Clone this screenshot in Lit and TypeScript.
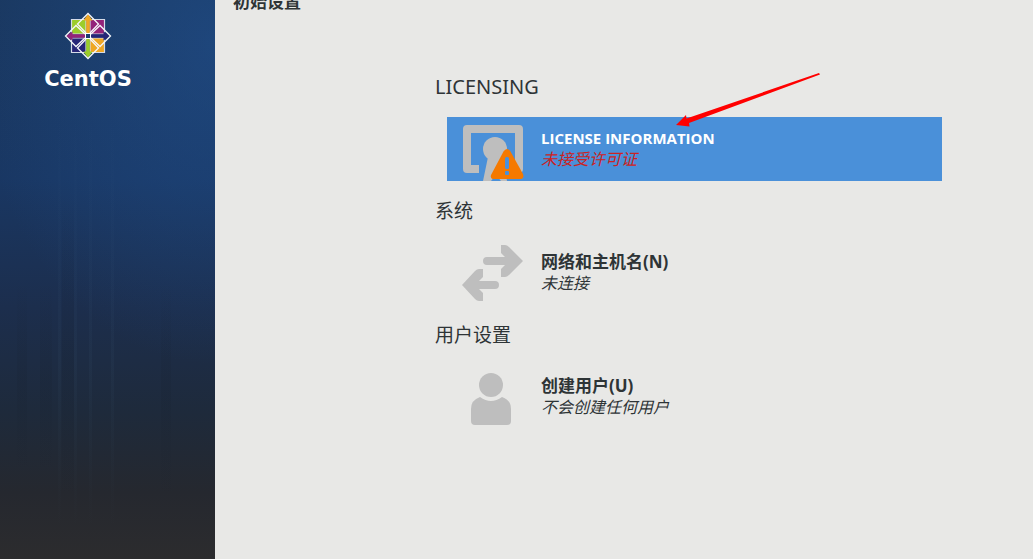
import { LitElement, html, svg, css, nothing, type TemplateResult } from "lit";
import { customElement, property } from "lit/decorators.js";

const licenseIcon = svg`
  <path fill="#bebebe" d="M4 0H56Q60 0 60 4V44Q60 48 56 48H52V8H8V40H16V48H4Q0 48 0 44V4Q0 0 4 0Z"/>
  <circle cx="32" cy="24" r="12" fill="#bebebe"/>
  <path fill="#bebebe" d="M25 32L20 56H28L33 50L38 56H44L40 32Z"/>
  <path fill="#f57900" d="M44 24Q46 24 47.500 26.500L60 49Q61.500 54 57 54H31Q27 54 28 50L40.500 26.500Q42 24 44 24Z"/>
  <rect x="42" y="32" width="4" height="12" rx="1.500" fill="#4a90d9"/>
  <rect x="42" y="46" width="4" height="4" rx="1" fill="#4a90d9"/>`;

const networkIcon = svg`
  <g fill="#bebebe">
    <path d="M38 -4H42Q44 -4 46 -2L60 12L46 26Q44 28 42 28H38V20L42 16H24A4 4 0 0 1 24 8H42L38 4Z"/>
    <path d="M20 20H16Q14 20 12 22L-1 36L12 50Q14 52 16 52H20V44L16 40H32A4 4 0 0 0 32 32H16L20 28Z"/>
  </g>`;

const userIcon = svg`
  <g fill="#bebebe">
    <circle cx="28" cy="12" r="12"/>
    <path d="M17 24Q28 32 39 24Q48 27 48 36V48Q48 52 44 52H12Q8 52 8 48V36Q8 27 17 24Z"/>
  </g>`;

@customElement("centos-logo")
class CentosLogo extends LitElement {
  static styles = css`
    :host {
      display: flex;
      flex-direction: column;
      align-items: center;
      width: 88px;
      color: #fff;
    }
    svg {
      display: block;
      width: 48px;
      height: 48px;
    }
    .name {
      font: bold 21px/24px "DejaVu Sans", sans-serif;
      margin-top: 7px;
    }
  `;

  render() {
    return html`
      <svg viewBox="-24 -24 48 48" aria-hidden="true">
        <g stroke="#d5dbe8" stroke-width="1.200">
          <path fill="#9ccd2a" d="M-16.500 -16.500H-2V-2H-16.500Z" />
          <path fill="#932279" d="M2 -16.500H16.500V-2H2Z" />
          <path fill="#262577" d="M-16.500 2H-2V16.500H-16.500Z" />
          <path fill="#efa724" d="M2 2H16.500V16.500H2Z" />
        </g>
        <g>
          <path fill="#efa724" d="M0 -22L4.500 -15.500H1.800V-2H-1.800V-15.500H-4.500Z" />
          <path fill="#262577" d="M22 0L15.500 4.500V1.800H2V-1.800H15.500V-4.500Z" />
          <path fill="#9ccd2a" d="M0 22L-4.500 15.500H-1.800V2H1.800V15.500H4.500Z" />
          <path fill="#932279" d="M-22 0L-15.500 -4.500V-1.800H-2V1.800H-15.500V4.500Z" />
        </g>
        <g fill="none" stroke="#f6f6f9" stroke-width="1.300">
          <path d="M-2 -3L-10.500 -12L0 -22.500L10.500 -12L2 -3" />
          <path d="M-2 3L-10.500 12L0 22.500L10.500 12L2 3" />
          <path d="M-3 -2L-12 -10.500L-22.500 0L-12 10.500L-3 2" />
          <path d="M3 -2L12 -10.500L22.500 0L12 10.500L3 2" />
        </g>
        <rect x="-2.500" y="-2.500" width="5" height="5" fill="#1b3d70" stroke="#fff" stroke-width="1" />
      </svg>
      <span class="name">CentOS</span>
    `;
  }
}

@customElement("hub-spoke")
class HubSpoke extends LitElement {
  @property() title = "";
  @property() status = "";
  @property({ type: Boolean }) selected = false;
  @property({ attribute: false }) icon: TemplateResult | typeof nothing = nothing;

  static styles = css`
    :host {
      display: block;
    }
    .spoke {
      display: flex;
      align-items: center;
      gap: 14px;
      width: 100%;
      height: 64px;
      margin: 0;
      padding: 0 12px;
      border: 0;
      background: transparent;
      color: #2e3436;
      font-family: "Noto Sans", "Noto Sans CJK SC", sans-serif;
      text-align: left;
      overflow: hidden;
    }
    .selected {
      background: #4a90d9;
      color: #fff;
    }
    svg {
      display: block;
      flex: none;
      width: 68px;
      height: 64px;
    }
    .text {
      display: flex;
      flex-direction: column;
      padding-bottom: 2px;
    }
    .title {
      font: bold 17px/22px "Open Sans", "Noto Sans CJK SC", sans-serif;
    }
    .selected .title {
      font-size: 15px;
    }
    .status {
      font-size: 16px;
      line-height: 20px;
      font-style: italic;
    }
    .selected .status {
      color: #cc2222;
    }
  `;

  render() {
    return html`
      <button class="spoke ${this.selected ? "selected" : ""}" type="button">
        <svg viewBox="-4 -8 68 64" aria-hidden="true">${this.icon}</svg>
        <span class="text">
          <span class="title">${this.title}</span>
          <span class="status">${this.status}</span>
        </span>
      </button>
    `;
  }
}

const groups = [
  { heading: "LICENSING", title: "LICENSE INFORMATION", status: "未接受许可证", icon: licenseIcon, selected: true },
  { heading: "系统", title: "网络和主机名(N)", status: "未连接", icon: networkIcon, selected: false },
  { heading: "用户设置", title: "创建用户(U)", status: "不会创建任何用户", icon: userIcon, selected: false },
];

@customElement("app-root")
class AppRoot extends LitElement {
  static styles = css`
    :host {
      display: grid;
      grid-template-columns: 215px 1fr;
      min-height: 100vh;
      background: #e8e8e6;
      color: #2e3436;
      font-family: "Noto Sans", "Noto Sans CJK SC", sans-serif;
    }
    .sidebar {
      box-sizing: border-box;
      padding: 12px 44px;
      background:
        linear-gradient(180deg, transparent 35%, rgba(18, 26, 38, 0.14) 65%, transparent 90%) 62px 0 / 12px 100% no-repeat,
        linear-gradient(180deg, transparent 50%, rgba(18, 26, 38, 0.12) 68%, transparent 85%) 17px 0 / 10px 100% no-repeat,
        linear-gradient(180deg, transparent 50%, rgba(18, 26, 38, 0.12) 68%, transparent 85%) 40px 0 / 12px 100% no-repeat,
        linear-gradient(180deg, transparent 50%, rgba(18, 26, 38, 0.12) 70%, transparent 90%) 161px 0 / 10px 100% no-repeat,
        linear-gradient(180deg, transparent 20%, rgba(90, 130, 160, 0.06) 65%, transparent 95%) 58px 0 / 3px 100% no-repeat,
        linear-gradient(180deg, transparent 20%, rgba(90, 130, 160, 0.06) 65%, transparent 95%) 74px 0 / 3px 100% no-repeat,
        linear-gradient(180deg, transparent 20%, rgba(90, 130, 160, 0.06) 65%, transparent 95%) 89px 0 / 3px 100% no-repeat,
        linear-gradient(180deg, transparent 20%, rgba(90, 130, 160, 0.06) 65%, transparent 95%) 111px 0 / 3px 100% no-repeat,
        radial-gradient(ellipse 240px 320px at 100% 8%, rgba(34, 84, 150, 0.5), transparent),
        linear-gradient(180deg, #1a3860 0%, #193763 32%, #1c2e4d 55%, #1e2a3b 74%, #25282f 88%, #2c2c2e 100%);
    }
    .main {
      min-width: 0;
    }
    .titlebar {
      display: flex;
      align-items: flex-end;
      height: 14px;
      padding-left: 18px;
      overflow: hidden;
    }
    h1 {
      margin: 0;
      font-size: 17px;
      line-height: 24px;
      font-weight: bold;
    }
    .hub {
      display: flex;
      flex-direction: column;
      padding: 57px 91px 0 220px;
    }
    h2 {
      margin: 0;
      font-size: 19px;
      line-height: 32px;
      font-weight: normal;
    }
    h2.latin {
      font-size: 20px;
    }
    hub-spoke {
      margin: 14px 0 14px 12px;
    }
    .pointer {
      position: absolute;
      left: 675px;
      top: 72px;
      width: 146px;
      height: 56px;
      pointer-events: none;
    }
  `;

  render() {
    return html`
      <aside class="sidebar"><centos-logo></centos-logo></aside>
      <main class="main">
        <header class="titlebar"><h1>初始设置</h1></header>
        <div class="hub">
          ${groups.map(
            (g) => html`
              <h2 class=${/^[A-Z]+$/.test(g.heading) ? "latin" : ""}>${g.heading}</h2>
              <hub-spoke .title=${g.title} .status=${g.status} .icon=${g.icon} .selected=${g.selected}></hub-spoke>
            `,
          )}
        </div>
      </main>
      <svg class="pointer" viewBox="0 0 146 56" aria-hidden="true">
        <path fill="#ff0000" d="M1 53L11 43L11.500 46.500L144 1L145 2.500L14 51L14.500 54.500Z" />
      </svg>
    `;
  }
}
